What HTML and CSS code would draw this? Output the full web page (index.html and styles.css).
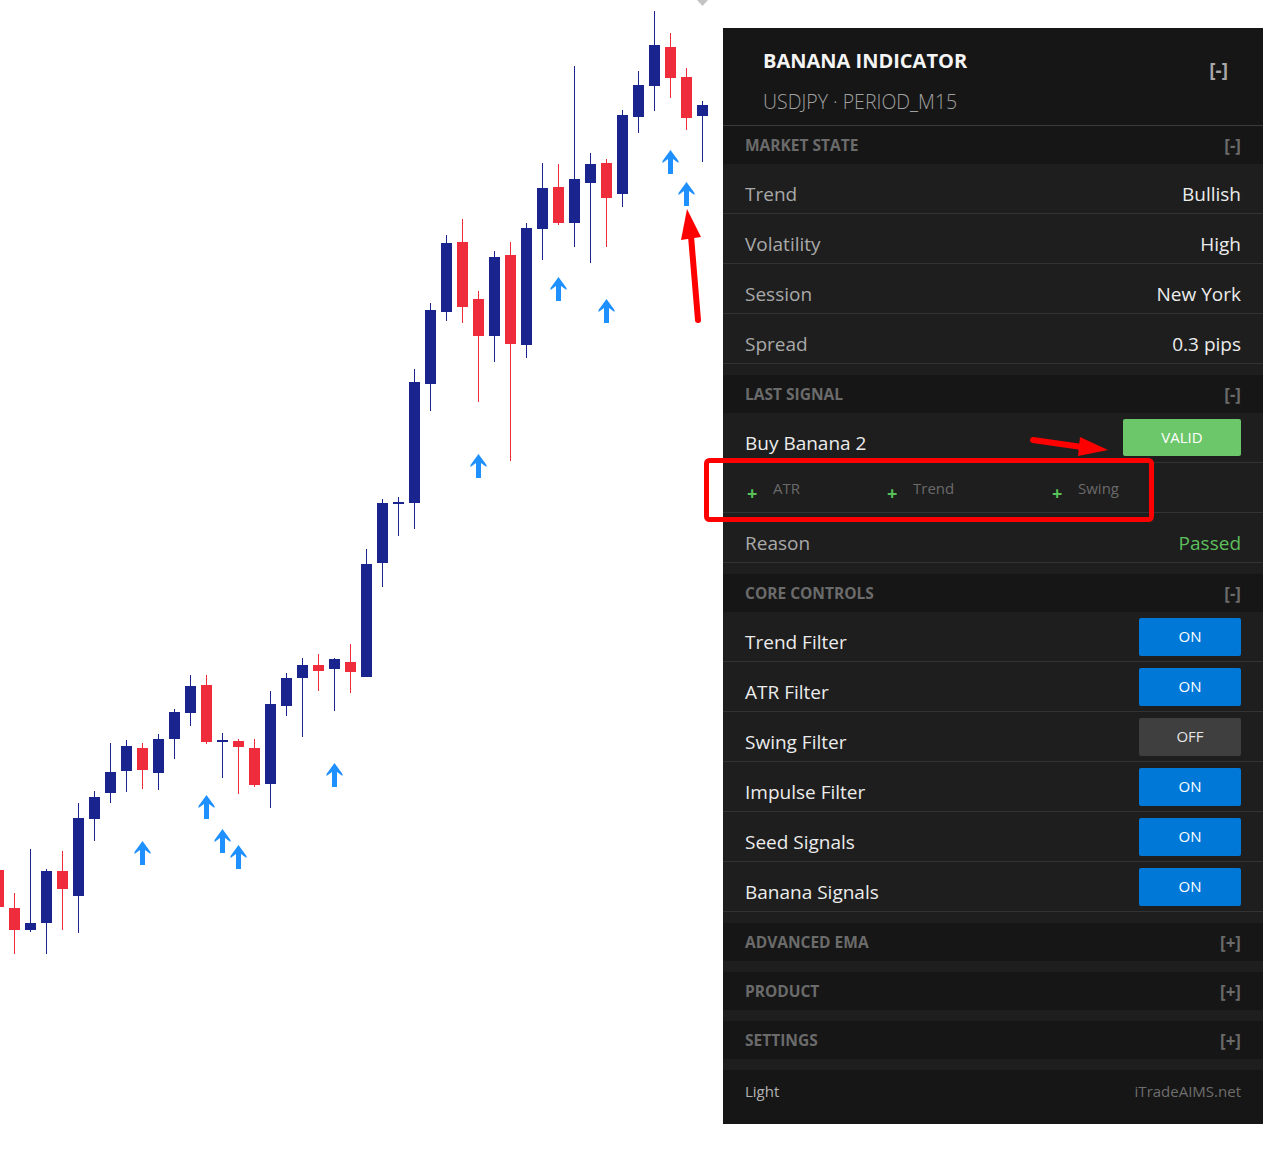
FILE: index.html
```html
<!DOCTYPE html>
<html lang="en">

<head>
    <meta charset="utf-8">
    <meta name="viewport" content="width=device-width, initial-scale=1">
    <title>Banana Indicator</title>
    <link rel="stylesheet" href="styles.css">
</head>

<body>
    <div class="stage">
        <svg class="chart" id="chart" width="723" height="1156" viewBox="0 0 723 1156">
            <polygon class="scroll-mark" points="697,0 708,0 702.5,6"></polygon>
        </svg>

        <aside class="panel">
            <header class="panel-head">
                <div>
                    <h1 class="panel-title">BANANA INDICATOR</h1>
                    <div class="panel-sub">USDJPY · PERIOD_M15</div>
                </div>
                <span class="toggle">[-]</span>
            </header>

            <section class="group">
                <div class="group-head"><span>MARKET STATE</span><span class="fold">[-]</span></div>
                <div class="row"><span class="label">Trend</span><span class="value">Bullish</span></div>
                <div class="row"><span class="label">Volatility</span><span class="value">High</span></div>
                <div class="row"><span class="label">Session</span><span class="value">New York</span></div>
                <div class="row"><span class="label">Spread</span><span class="value">0.3 pips</span></div>
            </section>

            <section class="group">
                <div class="group-head"><span>LAST SIGNAL</span><span class="fold">[-]</span></div>
                <div class="row">
                    <span class="label strong">Buy Banana 2</span>
                    <span class="btn btn-valid">VALID</span>
                </div>
                <div class="row row-chips">
                    <span class="chip"><b class="chip-plus">+</b>ATR</span>
                    <span class="chip"><b class="chip-plus">+</b>Trend</span>
                    <span class="chip"><b class="chip-plus">+</b>Swing</span>
                </div>
                <div class="row"><span class="label">Reason</span><span class="value ok">Passed</span></div>
            </section>

            <section class="group">
                <div class="group-head"><span>CORE CONTROLS</span><span class="fold">[-]</span></div>
                <div class="row"><span class="label strong">Trend Filter</span><span class="btn btn-on">ON</span></div>
                <div class="row"><span class="label strong">ATR Filter</span><span class="btn btn-on">ON</span></div>
                <div class="row"><span class="label strong">Swing Filter</span><span class="btn btn-off">OFF</span></div>
                <div class="row"><span class="label strong">Impulse Filter</span><span class="btn btn-on">ON</span></div>
                <div class="row"><span class="label strong">Seed Signals</span><span class="btn btn-on">ON</span></div>
                <div class="row"><span class="label strong">Banana Signals</span><span class="btn btn-on">ON</span></div>
            </section>

            <section class="group">
                <div class="group-head"><span>ADVANCED EMA</span><span class="fold">[+]</span></div>
            </section>
            <section class="group">
                <div class="group-head"><span>PRODUCT</span><span class="fold">[+]</span></div>
            </section>
            <section class="group">
                <div class="group-head"><span>SETTINGS</span><span class="fold">[+]</span></div>
            </section>

            <footer class="panel-foot">
                <span class="foot-theme">Light</span>
                <span class="foot-brand">iTradeAIMS.net</span>
            </footer>
        </aside>
    </div>

    <svg class="marks" width="1284" height="1156" viewBox="0 0 1284 1156">
        <rect x="706.5" y="460.5" width="445" height="59" rx="3"></rect>
        <line x1="698" y1="320" x2="691" y2="236"></line>
        <polygon points="687,209 681,240 701,237"></polygon>
        <line x1="1033" y1="440" x2="1082" y2="447"></line>
        <polygon points="1080,437 1108,450 1078,456"></polygon>
    </svg>

    <script>
        // [bodyTop, bodyBottom, wickTop, wickBottom, bullish]
        const candles = [
            [870, 907, 870, 907, 0], [908, 930, 893, 954, 0], [923, 930, 849, 932, 1],
            [871, 923, 869, 954, 1], [871, 889, 851, 930, 0], [818, 896, 803, 933, 1],
            [797, 819, 791, 841, 1], [772, 793, 743, 803, 1], [746, 771, 740, 792, 1],
            [748, 770, 743, 789, 0], [739, 773, 734, 790, 1], [712, 739, 709, 759, 1],
            [686, 713, 675, 726, 1], [685, 742, 675, 744, 0], [740, 742, 733, 778, 1],
            [741, 747, 739, 794, 0], [748, 785, 739, 787, 0], [704, 784, 691, 808, 1],
            [678, 706, 673, 716, 1], [665, 678, 658, 737, 1], [665, 671, 654, 691, 0],
            [659, 669, 658, 711, 1], [662, 672, 644, 693, 0], [564, 677, 549, 677, 1],
            [503, 563, 499, 587, 1], [502, 504, 497, 536, 1], [382, 503, 369, 529, 1],
            [310, 384, 303, 411, 1], [243, 312, 235, 321, 1], [242, 307, 219, 323, 0],
            [299, 336, 291, 402, 0], [257, 336, 251, 362, 1], [255, 344, 242, 461, 0],
            [228, 345, 223, 358, 1], [188, 229, 163, 260, 1], [187, 223, 164, 225, 0],
            [179, 223, 66, 247, 1], [164, 183, 153, 263, 1], [163, 198, 159, 247, 0],
            [115, 194, 110, 207, 1], [85, 117, 71, 133, 1], [45, 86, 11, 111, 1],
            [47, 78, 33, 98, 0], [77, 118, 68, 130, 0], [105, 116, 101, 162, 1]
        ];
        // candle index -> arrow top
        const arrows = [[9, 841], [13, 795], [14, 829], [15, 845], [21, 763],
            [30, 454], [35, 277], [38, 299], [42, 150], [43, 182]];

        const svg = document.getElementById('chart');
        const NS = 'http://www.w3.org/2000/svg';
        const STEP = 16, FIRST = -7, W = 11;

        function add(tag, attrs) {
            const el = document.createElementNS(NS, tag);
            for (const k in attrs) el.setAttribute(k, attrs[k]);
            svg.appendChild(el);
        }

        candles.forEach((c, i) => {
            const x = FIRST + STEP * i;
            const cls = c[4] ? 'bull' : 'bear';
            add('rect', { class: cls, x: x + 5, y: c[2], width: 1, height: c[3] - c[2] });
            add('rect', { class: cls, x: x, y: c[0], width: W, height: Math.max(c[1] - c[0], 2) });
        });

        arrows.forEach(a => {
            const cx = FIRST + STEP * a[0] + 5.5, t = a[1];
            const d = `M${cx} ${t} L${cx + 8} ${t + 11} L${cx + 8} ${t + 13} L${cx + 2.5} ${t + 9}
                L${cx + 2.5} ${t + 24} L${cx - 2.5} ${t + 24} L${cx - 2.5} ${t + 9}
                L${cx - 8} ${t + 13} L${cx - 8} ${t + 11} Z`;
            add('path', { class: 'signal', d: d });
        });
    </script>
</body>

</html>
```

FILE: styles.css
```css
body {
    -webkit-font-smoothing: antialiased;
    font-family: "Open Sans", "Noto Sans", Arial, sans-serif;
    margin: 0;
    background: #fff;
}

.stage {
    display: flex;
    align-items: flex-start;
}

.chart {
    flex: 0 0 723px;
    display: block;
}

.chart .bull {
    fill: #19248f;
}

.chart .bear {
    fill: #ee2c3b;
}

.chart .signal {
    fill: #1e90ff;
}

.chart .scroll-mark {
    fill: #c4c4c4;
}

/* indicator panel */
.panel {
    width: 540px;
    margin-top: 28px;
    background: #1e1e1e;
    color: #ececec;
}

.panel-head {
    display: flex;
    justify-content: space-between;
    align-items: flex-start;
    height: 98px;
    box-sizing: border-box;
    padding: 21px 35px 0 40px;
    background: #161616;
    border-bottom: 1px solid #3a3a3a;
}

.panel-title {
    margin: 0;
    font-size: 20px;
    font-weight: 700;
    line-height: 24px;
    color: #f4f4f4;
}

.panel-sub {
    margin-top: 17px;
    font-size: 19.5px;
    font-weight: 300;
    line-height: 24px;
    color: #a0a0a0;
}

.panel-head .toggle {
    margin-top: 9px;
    font-size: 19px;
    font-weight: 700;
    line-height: 24px;
    color: #a8a8a8;
}

.group + .group {
    margin-top: 11px;
}

.group-head {
    display: flex;
    justify-content: space-between;
    align-items: center;
    height: 38px;
    padding: 0 22px;
    background: #161616;
    font-size: 15.5px;
    font-weight: 700;
    color: #6b6b6b;
}

.group-head .fold {
    font-size: 17px;
}

.row {
    display: flex;
    justify-content: space-between;
    align-items: center;
    height: 50px;
    box-sizing: border-box;
    padding: 0 22px;
    border-bottom: 1px solid #333;
    font-size: 19px;
}

.label,
.value {
    padding-top: 11px;
    line-height: 26px;
}

.label {
    color: #a9a9a9;
}

.label.strong,
.value {
    color: #ececec;
}

.value.ok {
    color: #5cbf5c;
}

.btn {
    display: flex;
    align-items: center;
    justify-content: center;
    width: 102px;
    height: 38px;
    padding-bottom: 2px;
    box-sizing: border-box;
    border-radius: 2px;
    font-size: 15px;
    color: #fff;
}

.btn-on {
    background: #0078d7;
}

.btn-off {
    background: #3f3f3f;
    color: #e4e4e4;
}

.btn-valid {
    width: 118px;
    height: 37px;
    background: #6cc66a;
}

.row-chips {
    justify-content: flex-start;
    padding-left: 24px;
}

.chip {
    display: flex;
    align-items: center;
    font-size: 15px;
    color: #6a6a6a;
}

.chip:nth-child(1) {
    width: 140px;
}

.chip:nth-child(2) {
    width: 165px;
}

.chip-plus {
    width: 26px;
    padding-top: 10px;
    font-size: 18px;
    color: #58c058;
}

.panel-foot {
    display: flex;
    justify-content: space-between;
    height: 54px;
    box-sizing: border-box;
    margin-top: 11px;
    padding: 11px 22px 0;
    background: #161616;
    font-size: 15px;
    line-height: 20px;
}

.foot-theme {
    color: #b3b3b3;
}

.foot-brand {
    color: #6e6e6e;
}

/* red annotations drawn over the screenshot */
.marks {
    position: absolute;
    top: 0;
    left: 0;
    pointer-events: none;
}

.marks rect,
.marks line {
    fill: none;
    stroke: #ff0000;
    stroke-width: 5;
    stroke-linecap: round;
}

.marks line {
    stroke-width: 6;
}

.marks polygon {
    fill: #ff0000;
}
```
